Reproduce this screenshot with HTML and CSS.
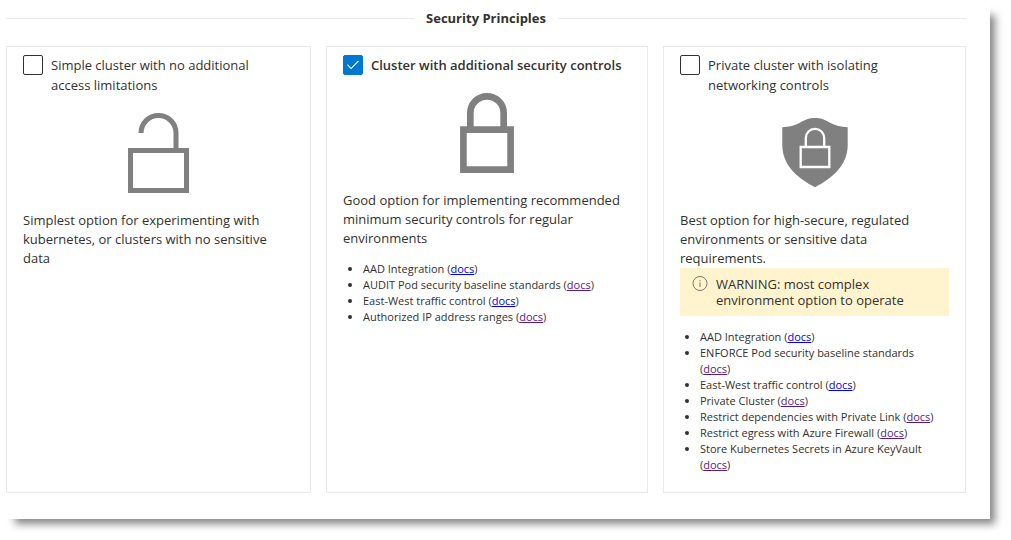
FILE: index.html
```html
<!DOCTYPE html>
<html lang="en">
<head>
<meta charset="utf-8">
<title>Security Principles</title>
<link rel="stylesheet" href="styles.css">
</head>
<body>
<main class="sheet">
  <h2 class="separator">Security Principles</h2>
  <div class="cards">
    <section class="card">
      <label class="choice"><input class="tick" type="checkbox"><span>Simple cluster with no additional access limitations</span></label>
      <svg class="picture" width="61" height="80" viewBox="0 0 61 80" fill="none" stroke="#808080" stroke-width="5" aria-hidden="true">
        <path d="M13 20a17.5 17.5 0 0 1 35 0v17"/>
        <path d="M2.5 37.5h56v40h-56z"/>
      </svg>
      <p class="summary">Simplest option for experimenting with kubernetes, or clusters with no sensitive data</p>
    </section>
    <section class="card">
      <label class="choice"><input class="tick" type="checkbox" checked><span>Cluster with additional security controls</span></label>
      <svg class="picture" width="54" height="80" viewBox="0 0 54 80" fill="none" stroke="#808080" stroke-width="6.67" aria-hidden="true">
        <path d="M10.33 36V20a16.67 16.67 0 0 1 33.34 0v16"/>
        <path d="M3.4 36.67h47.2v40H3.4z"/>
      </svg>
      <p class="summary">Good option for implementing recommended minimum security controls for regular environments</p>
      <ul class="features">
        <li>AAD Integration (<a href="#aad">docs</a>)</li>
        <li>AUDIT Pod security baseline standards (<a class="seen" href="#pod">docs</a>)</li>
        <li>East-West traffic control (<a href="#traffic">docs</a>)</li>
        <li>Authorized IP address ranges (<a class="seen" href="#ranges">docs</a>)</li>
      </ul>
    </section>
    <section class="card">
      <label class="choice"><input class="tick" type="checkbox"><span>Private cluster with isolating networking controls</span></label>
      <svg class="picture" width="66" height="80" viewBox="0 0 66 80" aria-hidden="true">
        <path fill="#808080" d="M0.3 14.2C7 14 13 12.6 18 9.8C24 6.2 27.5 5 33 5C38.5 5 42 6.2 48 9.8C53 12.6 59 14 65.7 14.2V32C65.7 53 49 66 33 74.2C17 66 0.3 53 0.3 32Z"/>
        <path fill="none" stroke="#fff" stroke-width="2.3" d="M23.8 34v-9a9.2 9.2 0 0 1 18.4 0v9M18.7 34h28.6v20H18.7z"/>
      </svg>
      <p class="summary">Best option for high-secure, regulated environments or sensitive data requirements.</p>
      <div class="warning">
        <svg class="info" width="16" height="16" viewBox="0 0 16 16" aria-hidden="true">
          <circle cx="8" cy="7.5" r="7" fill="none" stroke="#7d7768"/>
          <path d="M8 6.3V11M8 4v1.2" stroke="#7d7768"/>
        </svg>
        <span>WARNING: most complex environment option to operate</span>
      </div>
      <ul class="features">
        <li>AAD Integration (<a href="#aad">docs</a>)</li>
        <li>ENFORCE Pod security baseline standards (<a class="seen" href="#pod">docs</a>)</li>
        <li>East-West traffic control (<a href="#traffic">docs</a>)</li>
        <li>Private Cluster (<a class="seen" href="#private">docs</a>)</li>
        <li>Restrict dependencies with Private Link (<a class="seen" href="#link">docs</a>)</li>
        <li>Restrict egress with Azure Firewall (<a class="seen" href="#firewall">docs</a>)</li>
        <li>Store Kubernetes Secrets in Azure KeyVault (<a class="seen" href="#vault">docs</a>)</li>
      </ul>
    </section>
  </div>
</main>
</body>
</html>
```
FILE: styles.css
```css
* {
  box-sizing: border-box;
}

body {
  min-height: 100vh;
  margin: 0;
  padding: 0 21px 21px 0;
  background: #fff;
  color: #323130;
  font: 13px/19px "Open Sans", "Noto Sans", sans-serif;
}

.sheet {
  padding: 8px 24px 26px 6px;
  background: #fff;
  box-shadow: 10px 10px 8px -5px rgba(0, 0, 0, 0.48);
}

.separator {
  display: flex;
  align-items: center;
  gap: 12px;
  margin: 0 0 18px;
  font-size: 13px;
  font-weight: 700;
  line-height: 20px;
}

.separator::before,
.separator::after {
  content: "";
  flex: 1;
  height: 1px;
  background: #edebe9;
}

.cards {
  display: grid;
  grid-template-columns: 305fr 322fr 303fr;
  gap: 15px;
}

.card {
  display: flex;
  flex-direction: column;
  padding: 8px 16px;
  border: 1px solid #e8e8e8;
}

.choice {
  display: flex;
  align-items: flex-start;
  gap: 8px;
  padding-right: 6px;
  line-height: 20px;
}

.choice:has(:checked) {
  font-weight: 600;
}

.tick {
  appearance: none;
  flex: none;
  width: 20px;
  height: 20px;
  margin: 0;
  border: 1px solid #323130;
  border-radius: 2px;
  background: #fff;
}

.tick:checked {
  display: grid;
  place-items: center;
  border-color: #0078d4;
  background: #0078d4;
}

.tick:checked::before {
  content: "";
  width: 12px;
  height: 9px;
  background: #fff;
  clip-path: polygon(0 51%, 6% 43%, 34% 80%, 93% 0, 100% 8%, 34% 97%);
}

.picture {
  align-self: center;
  margin: 18px 0;
}

.summary {
  margin: 0;
}

.warning {
  display: flex;
  gap: 8px;
  padding: 8px 12px;
  background: #fff4ce;
  line-height: 16px;
}

.info {
  flex: none;
}

.features {
  margin: 13px 0 11px;
  padding: 0 6px 0 20px;
  font-size: 11px;
  line-height: 16px;
}

.features a {
  color: #0000ee;
}

.features .seen {
  color: #551a8b;
}
```
